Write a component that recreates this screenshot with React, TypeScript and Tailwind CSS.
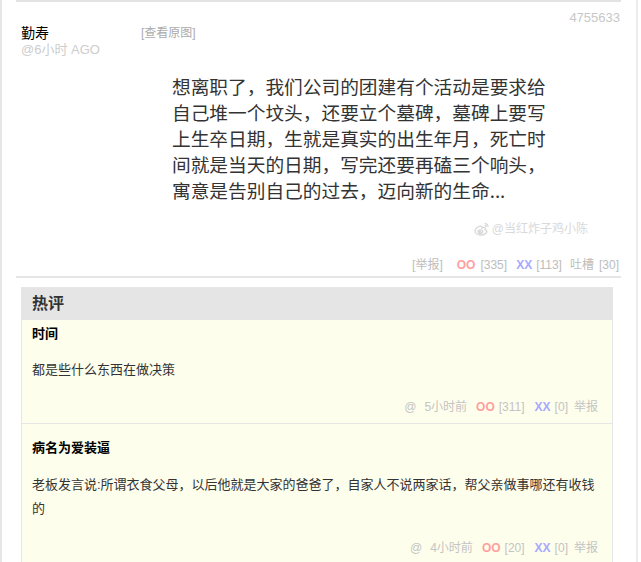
import React from "react";

const F = "font-['Liberation_Sans','Noto_Sans_CJK_SC',sans-serif]";

function WeiboLogo() {
  return (
    <svg width="16" height="14" viewBox="0 0 16 14" fill="none" stroke="#d6d6d6" strokeWidth="1.3">
      <path d="M6.5 4.2C3.6 4.6 1 6.8 1 9.2c0 2.3 2.8 3.8 5.8 3.8 3.4 0 6-1.7 6-3.6 0-1.2-1-1.7-1.8-1.9.4-.9.4-1.7-.2-2-.8-.4-2.2.2-2.9.5.3-.9.2-1.9-1.4-1.8z" />
      <ellipse cx="6.4" cy="9.6" rx="2.4" ry="1.8" />
      <circle cx="6" cy="9.8" r="0.6" fill="#d6d6d6" />
      <path d="M10.6 1.6c1.9-.3 3.7 1.3 3.3 3.3" />
      <path d="M10.6 3.4c.9-.1 1.7.6 1.5 1.5" />
    </svg>
  );
}

function Comment({
  name,
  lines,
  time,
  oo,
  xx,
  pt,
  gapName,
  gapFoot,
  pb,
  border,
}: {
  name: string;
  lines: string[];
  time: string;
  oo: string;
  xx: string;
  pt: string;
  gapName: string;
  gapFoot: string;
  pb: string;
  border: boolean;
}) {
  return (
    <div className={`${pt} ${pb} pl-[10px] pr-[14px] ${border ? "border-b border-[#e6e6e6]" : ""}`}>
      <div className="text-[13px] leading-[20px] font-bold text-black">{name}</div>
      <div className={`${gapName} text-[13px] leading-[24px] text-[#333]`}>
        {lines.map((l, i) => (
          <div key={i} className="whitespace-nowrap">{l}</div>
        ))}
      </div>
      <div className={`${gapFoot} flex justify-end items-center text-[12px] leading-[20px] text-[#c4c4c4]`}>
        <span>@</span>
        <span className="ml-[8px]">{time}</span>
        <span className="ml-[9px] font-bold text-[#ff9f9f]">OO</span>
        <span className="ml-[4px]">[{oo}]</span>
        <span className="ml-[10px] font-bold text-[#a8a8ff]">XX</span>
        <span className="ml-[4px]">[{xx}]</span>
        <span className="ml-[6px]">举报</span>
      </div>
    </div>
  );
}

export default function App() {
  return (
    <div className={`w-[641px] h-[562px] overflow-hidden bg-white flex ${F}`}>
      <div className="w-[621px] shrink-0 border-l-2 border-[#e6e6e6] pl-[14px]">
        {/* post */}
        <div className="border-t-2 border-[#e3e3e3]">
          <div className="flex justify-between items-start">
            <div className="pl-[5px] pt-[22px]">
              <div className="flex items-center h-[18px]">
                <span className="w-[120px] text-[14px] leading-[18px] text-black">勤寿</span>
                <span className="text-[12px] leading-[18px] text-[#ababab]">[查看原图]</span>
              </div>
              <div className="text-[13px] leading-[16px] text-[#cdcdcd]">@6小时 AGO</div>
            </div>
            <div className="pt-[7px] pr-[1px] text-[13px] leading-[18px] text-[#c8c8c8]">4755633</div>
          </div>

          <div className="mt-[15px] ml-[156px] text-[18.7px] leading-[26px] text-[#333] font-['Noto_Sans_CJK_SC',sans-serif]">
            <div className="whitespace-nowrap">想离职了，我们公司的团建有个活动是要求给</div>
            <div className="whitespace-nowrap">自己堆一个坟头，还要立个墓碑，墓碑上要写</div>
            <div className="whitespace-nowrap">上生卒日期，生就是真实的出生年月，死亡时</div>
            <div className="whitespace-nowrap">间就是当天的日期，写完还要再磕三个响头，</div>
            <div className="whitespace-nowrap">寓意是告别自己的过去，迈向新的生命...</div>
          </div>

          <div className="mt-[18px] flex justify-end items-center pr-[33px] h-[16px]">
            <WeiboLogo />
            <span className="ml-[2px] text-[12px] leading-[16px] text-[#d9d9d9]">@当红炸子鸡小陈</span>
          </div>

          <div className="mt-[19px] flex justify-end items-center pr-[2px] text-[12px] leading-[18px] text-[#bdbdbd]">
            <span>[举报]</span>
            <span className="ml-[14px] font-bold text-[#ff9f9f]">OO</span>
            <span className="ml-[5px]">[335]</span>
            <span className="ml-[9px] font-bold text-[#a8a8ff]">XX</span>
            <span className="ml-[4px]">[113]</span>
            <span className="ml-[8px]">吐槽</span>
            <span className="ml-[5px]">[30]</span>
          </div>
          <div className="mt-[2px] h-[2px] bg-[#e6e6e6]" />
        </div>

        {/* hot comments */}
        <div className="mt-[9px] ml-[5px] w-[592px] border border-[#e6e6e6] bg-[#fefeec]">
          <div className="h-[32px] bg-[#e5e5e5] flex items-center pl-[10px] text-[16px] font-bold text-[#333]">
            热评
          </div>
          <Comment
            name="时间"
            lines={["都是些什么东西在做决策"]}
            time="5小时前"
            oo="311"
            xx="0"
            pt="pt-[4px]"
            gapName="mt-[14px]"
            gapFoot="mt-[15px]"
            pb="pb-[6px]"
            border
          />
          <Comment
            name="病名为爱装逼"
            lines={[
              "老板发言说:所谓衣食父母，以后他就是大家的爸爸了，自家人不说两家话，帮父亲做事哪还有收钱",
              "的",
            ]}
            time="4小时前"
            oo="20"
            xx="0"
            pt="pt-[14px]"
            gapName="mt-[15px]"
            gapFoot="mt-[17px]"
            pb="pb-[8px]"
            border={false}
          />
        </div>
      </div>
      <div className="ml-[15px] w-[2px] bg-[#ececec] shrink-0" />
    </div>
  );
}
